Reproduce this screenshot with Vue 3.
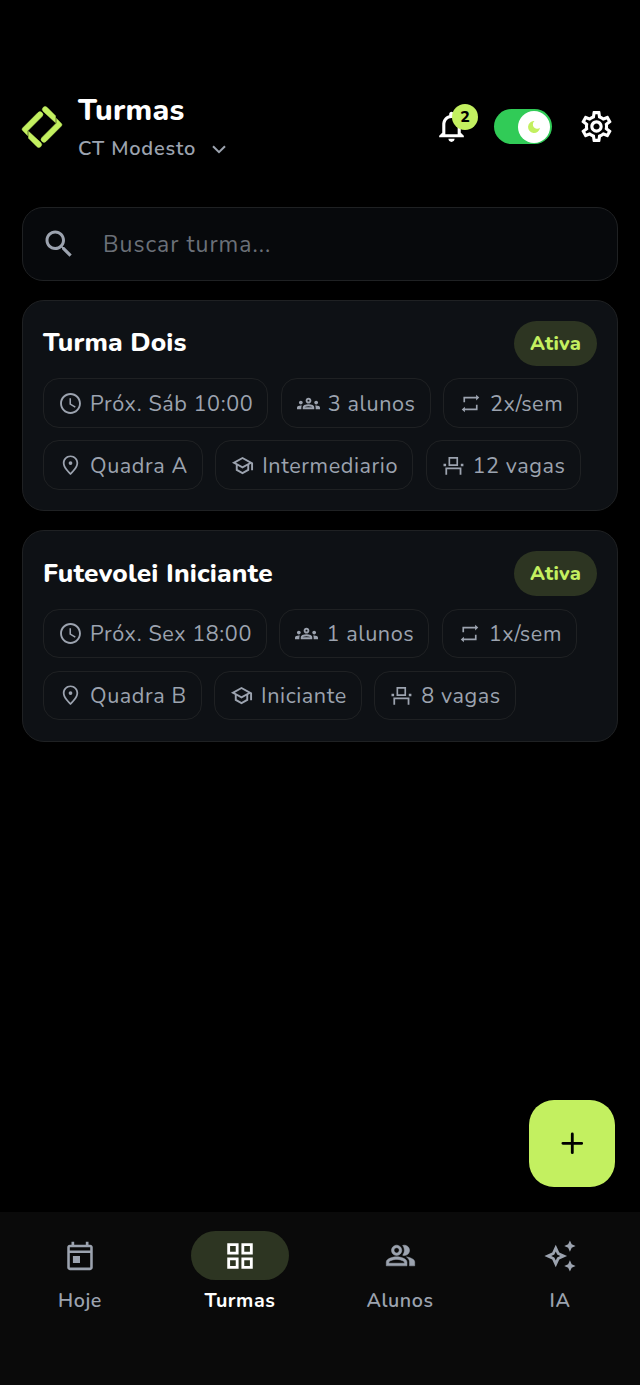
<script setup>
const icons = {
  clock: 'M11.99 2C6.47 2 2 6.48 2 12s4.47 10 9.99 10C17.52 22 22 17.52 22 12S17.52 2 11.99 2zM12 20.2c-4.5 0-8.2-3.7-8.2-8.2s3.7-8.2 8.2-8.2 8.2 3.7 8.2 8.2-3.7 8.2-8.2 8.2zm.5-13.2H11v6l5.25 3.15.75-1.23-4.5-2.67z',
  groups: 'M4 13c1.1 0 2-.9 2-2s-.9-2-2-2-2 .9-2 2 .9 2 2 2zm1.13 1.1c-.37-.06-.74-.1-1.13-.1-.99 0-1.93.21-2.78.58C.48 14.9 0 15.62 0 16.43V18h4.5v-1.61c0-.83.23-1.61.63-2.29zM20 13c1.1 0 2-.9 2-2s-.9-2-2-2-2 .9-2 2 .9 2 2 2zm4 3.43c0-.81-.48-1.53-1.22-1.85-.85-.37-1.79-.58-2.78-.58-.39 0-.76.04-1.13.1.4.68.63 1.46.63 2.29V18H24v-1.57zm-7.76-2.78c-1.17-.52-2.61-.9-4.24-.9s-3.07.39-4.24.9C6.68 14.13 6 15.21 6 16.39V18h12v-1.61c0-1.18-.68-2.26-1.76-2.74zM8.07 16c.09-.23.13-.39.91-.69.97-.38 1.99-.56 3.02-.56s2.05.18 3.02.56c.77.3.81.46.91.69H8.07zM12 8c.55 0 1 .45 1 1s-.45 1-1 1-1-.45-1-1 .45-1 1-1m0-2c-1.66 0-3 1.34-3 3s1.34 3 3 3 3-1.34 3-3-1.34-3-3-3z',
  repeat: 'M5.200 5.500h12.200V3.600l3 2.700-3 2.700V7.100H6.800v3.800H5.200zM18.800 18.500H6.600v1.900l-3-2.700 3-2.700v1.900h10.600v-3.800h1.600z',
  pin: 'M12 2.400C7.800 2.400 4.600 5.600 4.600 9.600c0 4.800 5.300 9.500 7.400 11.600 2.100-2.100 7.400-6.800 7.400-11.600 0-4-3.200-7.200-7.400-7.200zm0 16.500c-2.200-2.200-5.700-5.900-5.700-9.300a5.700 5.700 0 0 1 11.400 0c0 3.400-3.500 7.100-5.700 9.300zM12 7.800a1.800 1.800 0 1 0 0 3.600 1.800 1.800 0 0 0 0-3.600z',
  school: 'M12 3 1 9l4 2.180v6L12 21l7-3.820v-6l2-1.090V17h2V9L12 3zm6.820 6L12 12.720 5.180 9 12 5.280 18.820 9zM17 15.990l-5 2.730-5-2.730v-3.720L12 15l5-2.730v3.720z',
  seat: 'M7.200 3.800h9.200v8.600H7.200zm1.600 1.600v5.400h6V5.400zM4.200 13.800h15.400v7h-1.700v-5.300h-12v5.300H4.200zM2.400 10.300h2.500v2.500H2.400zm16.600 0h2.500v2.500H19z',
}

const classes = [
  {
    name: 'Turma Dois', status: 'Ativa',
    chips: [
      ['clock', 'Próx. Sáb 10:00'], ['groups', '3 alunos'], ['repeat', '2x/sem'],
      ['pin', 'Quadra A'], ['school', 'Intermediario'], ['seat', '12 vagas'],
    ],
  },
  {
    name: 'Futevolei Iniciante', status: 'Ativa',
    chips: [
      ['clock', 'Próx. Sex 18:00'], ['groups', '1 alunos'], ['repeat', '1x/sem'],
      ['pin', 'Quadra B'], ['school', 'Iniciante'], ['seat', '8 vagas'],
    ],
  },
]

const tabs = [
  { label: 'Hoje', kind: 'today', d: 'M19.200 4H18V2h-1.900v2H7.900V2H6v2H4.800C3.800 4 3 4.800 3 5.800v14.400C3 21.200 3.800 22 4.800 22h14.400c1 0 1.800-.800 1.800-1.800V5.800C21 4.800 20.200 4 19.200 4zm0 16.200H4.800V9.800h14.400zM19.200 8.200H4.800V5.800h14.400zM7 12h5v5H7z' },
  { label: 'Turmas', kind: 'grid', active: true, d: 'M3 3v8h8V3H3zm6 6H5V5h4v4zm-6 4v8h8v-8H3zm6 6H5v-4h4v4zm4-16v8h8V3h-8zm6 6h-4V5h4v4zm-6 4v8h8v-8h-8zm6 6h-4v-4h4v4z' },
  { label: 'Alunos', kind: 'people', d: 'M16.670 13.130C18.040 14.060 19 15.320 19 17v3h4v-3c0-2.180-3.570-3.470-6.330-3.870zM9 12c2.210 0 4-1.790 4-4s-1.790-4-4-4-4 1.790-4 4 1.790 4 4 4zm0-6c1.100 0 2 .900 2 2s-.900 2-2 2-2-.900-2-2 .900-2 2-2zm6 6c2.210 0 4-1.790 4-4s-1.790-4-4-4c-.470 0-.910.100-1.330.240C14.500 5.270 15 6.580 15 8s-.500 2.730-1.330 3.760c.420.140.860.240 1.330.240zm-6 1c-2.670 0-8 1.340-8 4v3h16v-3c0-2.660-5.330-4-8-4zm6 5H3v-.990C3.200 16.290 6.300 15 9 15s5.800 1.290 6 2v1z' },
  { label: 'IA', kind: 'spark', d: 'm19 9 1.250-2.750L23 5l-2.750-1.250L19 1l-1.250 2.750L15 5l2.750 1.250zm0 6-1.250 2.750L15 19l2.750 1.250L19 23l1.250-2.750L23 19l-2.750-1.250zM11.500 9.500 9 4 6.500 9.500 1 12l5.500 2.500L9 20l2.500-5.500L17 12l-5.500-2.500zm-1.510 3.490L9 15.170l-.990-2.180L5.830 12l2.180-.990L9 8.830l.990 2.180 2.180.990-2.180.990z' },
]
</script>

<template>
  <div class="screen">
    <header class="header">
      <svg class="logo" viewBox="0 0 40 40">
        <path d="M.6 21 16 5.600a2.800 2.800 0 0 1 4 4L5.500 24.100v4.500L.6 23.400q-1.200-1.200 0-2.400z" />
        <path d="M6.500 24.300 19 35.800a2.800 2.800 0 0 1-4 3.900L6.500 31.200z" />
        <path d="M39.400 19 24 34.400a2.800 2.800 0 0 1-4-4l14.500-14.500v-4.500l4.900 5.200q1.200 1.200 0 2.400z" />
        <path d="M33.500 15.700 21 4.200a2.800 2.800 0 0 1 4-3.900l8.500 8.500z" />
      </svg>
      <div class="heading">
        <h1>Turmas</h1>
        <div class="place">
          <span>CT Modesto</span>
          <svg class="chevron" viewBox="0 0 14 9"><path d="m1 1.200 6 6 6-6" /></svg>
        </div>
      </div>
      <div class="bell">
        <svg viewBox="0 0 24 24"><path d="M12 22c1.100 0 2-.900 2-2h-4c0 1.100.900 2 2 2zm6-6v-5c0-3.070-1.630-5.640-4.500-6.320V4c0-.830-.670-1.500-1.500-1.500s-1.500.670-1.500 1.500v.680C7.640 5.360 6 7.920 6 11v5l-2 2v1h16v-1l-2-2zm-2 1H8v-6c0-2.480 1.510-4.500 4-4.500s4 2.020 4 4.500v6z" /></svg>
        <span class="count">2</span>
      </div>
      <div class="switch">
        <div class="knob">
          <svg viewBox="0 0 12 12"><path d="M6.500 0A6 6 0 1 0 12 6.800 3.300 3.300 0 0 1 6.500 0z" /></svg>
        </div>
      </div>
      <svg class="gear" viewBox="0 0 24 24"><path d="M19.430 12.980c.040-.320.070-.640.070-.980 0-.340-.030-.660-.070-.980l2.110-1.650c.190-.150.240-.420.120-.640l-2-3.460c-.090-.160-.260-.250-.440-.250-.060 0-.120.010-.170.030l-2.490 1c-.520-.400-1.080-.730-1.690-.980l-.380-2.650C14.460 2.180 14.250 2 14 2h-4c-.250 0-.460.180-.490.420l-.380 2.650c-.610.250-1.170.590-1.690.980l-2.490-1c-.060-.020-.120-.030-.180-.030-.170 0-.340.090-.430.250l-2 3.460c-.130.220-.070.490.120.640l2.110 1.650c-.040.320-.070.650-.070.980 0 .330.030.660.070.980l-2.110 1.650c-.190.150-.240.420-.120.640l2 3.460c.090.160.260.250.440.250.060 0 .120-.010.170-.030l2.490-1c.520.400 1.080.730 1.690.980l.380 2.650c.030.240.240.420.490.420h4c.250 0 .460-.180.490-.420l.380-2.650c.610-.250 1.170-.590 1.690-.980l2.490 1c.060.020.120.030.180.030.170 0 .340-.090.430-.250l2-3.460c.120-.220.070-.490-.120-.640l-2.110-1.650zm-1.980-1.710c.040.310.050.520.050.730 0 .210-.020.430-.050.730l-.140 1.130.890.700 1.080.840-.700 1.210-1.270-.510-1.040-.420-.900.680c-.430.320-.840.560-1.250.730l-1.060.430-.160 1.130-.200 1.350h-1.400l-.190-1.350-.160-1.130-1.060-.430c-.430-.180-.830-.410-1.230-.710l-.910-.700-1.060.430-1.270.510-.700-1.210 1.080-.840.890-.700-.140-1.130c-.030-.310-.050-.540-.050-.740s.020-.430.050-.730l.140-1.130-.890-.700-1.080-.840.700-1.210 1.270.510 1.040.420.900-.680c.430-.320.840-.560 1.250-.730l1.060-.430.160-1.130.200-1.350h1.390l.190 1.350.160 1.130 1.060.430c.430.180.830.410 1.230.710l.910.700 1.060-.430 1.270-.510.700 1.210-1.070.850-.890.700.140 1.130zM12 8c-2.210 0-4 1.790-4 4s1.790 4 4 4 4-1.790 4-4-1.790-4-4-4zm0 6c-1.100 0-2-.900-2-2s.900-2 2-2 2 .900 2 2-.900 2-2 2z" /></svg>
    </header>

    <main class="content">
      <div class="search">
        <svg viewBox="0 0 24 24"><path d="M15.500 14h-.790l-.280-.270C15.410 12.590 16 11.110 16 9.500 16 5.910 13.090 3 9.500 3S3 5.910 3 9.500 5.910 16 9.500 16c1.610 0 3.090-.590 4.230-1.570l.270.280v.790l5 4.990L20.490 19l-4.990-5zm-6 0C7.010 14 5 11.990 5 9.500S7.010 5 9.500 5 14 7.010 14 9.500 11.990 14 9.500 14z" /></svg>
        <span>Buscar turma...</span>
      </div>

      <section v-for="item in classes" :key="item.name" class="card">
        <div class="card-head">
          <h2>{{ item.name }}</h2>
          <span class="status">{{ item.status }}</span>
        </div>
        <div class="chips">
          <div v-for="[icon, label] in item.chips" :key="label" class="chip" :class="icon">
            <svg viewBox="0 0 24 24"><path :d="icons[icon]" /></svg>
            <span>{{ label }}</span>
          </div>
        </div>
      </section>
    </main>

    <div class="fab-row">
      <button class="fab" aria-label="Adicionar">
        <svg viewBox="0 0 24 24"><path d="M12 2v20M2 12h20" /></svg>
      </button>
    </div>

    <nav class="tabs">
      <div v-for="tab in tabs" :key="tab.label" class="tab" :class="[tab.kind, { active: tab.active }]">
        <div class="pill"><svg viewBox="0 0 24 24"><path :d="tab.d" /></svg></div>
        <span>{{ tab.label }}</span>
      </div>
    </nav>
  </div>
</template>

<style>
html, body { margin: 0; background: #000; }
</style>

<style scoped>
* { box-sizing: border-box; }
svg { display: block; flex: none; fill: currentColor; }
.screen {
  width: 640px; height: 1385px; display: flex; flex-direction: column;
  background: #000; color: #fff; overflow: hidden;
  font-family: Nunito, "Noto Sans", "Open Sans", sans-serif;
}
.header { display: flex; align-items: center; height: 80px; margin-top: 86.500px; padding: 0 25px 0 22px; }
.logo { width: 40px; height: 40px; color: #c3f060; overflow: visible; }
.logo path { stroke: currentColor; stroke-width: .5; }
.heading { margin-left: 16px; padding-top: 6px; flex: 1; }
h1 { margin: 0; font-size: 30px; line-height: 39px; font-weight: 800; letter-spacing: .3px; white-space: nowrap; }
.place { display: flex; align-items: center; color: #9ca3af; font-size: 20px; line-height: 38px; font-weight: 600; letter-spacing: .8px; }
.chevron { width: 14px; height: 9px; margin-left: 16px; }
.chevron path { fill: none; stroke: currentColor; stroke-width: 2; }
.bell { position: relative; margin-right: 24px; }
.bell svg { width: 37px; height: 37px; }
.count {
  position: absolute; left: 19px; top: -4.500px; width: 26px; height: 26px; border-radius: 50%;
  background: #c3f060; color: #000; font-size: 16px; font-weight: 800; line-height: 26px; text-align: center;
}
.switch { width: 58px; height: 35px; border-radius: 18px; background: #31cb57; display: flex; justify-content: flex-end; padding: 1.500px 2px; margin-right: 26px; }
.knob { width: 32px; height: 32px; border-radius: 50%; background: #fff; color: #c3f060; display: grid; place-items: center; }
.knob svg { width: 12px; height: 12px; }
.gear { width: 37px; height: 37px; }
.content { padding: 40.500px 22px 0; flex: 1; display: flex; flex-direction: column; gap: 18.800px; }
.search {
  display: flex; align-items: center; height: 74px; padding-left: 17.500px; gap: 26.500px;
  background: #07090c; border: 1.500px solid #1f2123; border-radius: 21px; color: #6b7078; font-size: 23px; letter-spacing: 1px;
}
.search svg { width: 36px; height: 36px; color: #9ca3af; }
.card { height: 211.500px; border: 1.500px solid #1f2123; border-radius: 22px; background: #0e1115; padding: 20px 20px 0; }
.card-head { display: flex; justify-content: space-between; align-items: center; height: 45px; }
h2 { margin: 0; padding-bottom: 2px; font-size: 26.300px; line-height: 42px; font-weight: 800; letter-spacing: .15px; }
.status { width: 83px; height: 45px; border-radius: 23px; background: #2d3522; color: #c3f060; font-size: 20px; font-weight: 800; line-height: 45px; text-align: center; letter-spacing: .2px; }
.chips { display: flex; flex-wrap: wrap; gap: 12.500px; margin-top: 12.500px; margin-right: -20px; }
.chip {
  display: flex; align-items: center; gap: 7px; height: 49.500px; padding: 0 14px; white-space: nowrap;
  border: 1.500px solid #1f2123; border-radius: 16px; color: #9ca3af; font-size: 21.600px; letter-spacing: .58px;
}
.chip span { padding-top: 1px; }
.chip svg { width: 25px; height: 25px; }
.chip.school svg, .chip.groups svg { padding: 1px; }
.fab-row { display: flex; justify-content: flex-end; padding: 0 24.700px 25px; }
.fab { width: 86.600px; height: 86.600px; border: 0; border-radius: 25px; background: #c3f060; color: #000; display: grid; place-items: center; padding: 0; }
.fab svg { width: 22.600px; height: 22.600px; }
.fab path { fill: none; stroke: currentColor; stroke-width: 3; stroke-linecap: round; }
.tabs { height: 173px; background: #0a0a0a; display: grid; grid-template-columns: repeat(4, 1fr); }
.tab { display: flex; flex-direction: column; align-items: center; padding-top: 19px; color: #9ca3af; font-size: 19.700px; line-height: 26px; font-weight: 600; letter-spacing: .55px; }
.pill { width: 98px; height: 49px; border-radius: 25px; display: grid; place-items: center; margin-bottom: 8px; }
.pill svg { width: 34px; height: 34px; }
.people .pill svg { width: 31px; height: 31px; }
.people .pill path { stroke: currentColor; stroke-width: .4; }
.active { color: #fff; font-weight: 700; }
.active .pill { background: #2d3522; }
</style>
